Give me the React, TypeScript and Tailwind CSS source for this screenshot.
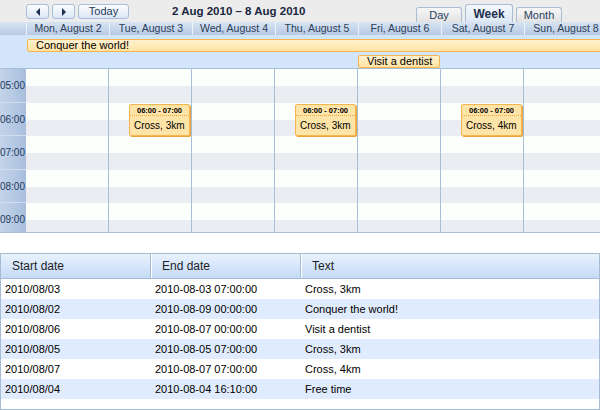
import React from 'react';

const days = [
  'Mon, August 2',
  'Tue, August 3',
  'Wed, August 4',
  'Thu, August 5',
  'Fri, August 6',
  'Sat, August 7',
  'Sun, August 8',
];

// hour rows alternate 34/33 so the lines land where the original ones do
const hours = [
  { label: '05:00', h: 'h-[34px]' },
  { label: '06:00', h: 'h-[33px]' },
  { label: '07:00', h: 'h-[34px]' },
  { label: '08:00', h: 'h-[33px]' },
  { label: '09:00', h: 'h-[34px]' },
];

const cross: Record<number, string> = { 1: 'Cross, 3km', 3: 'Cross, 3km', 5: 'Cross, 4km' };

const rows = [
  ['2010/08/03', '2010-08-03 07:00:00', 'Cross, 3km'],
  ['2010/08/02', '2010-08-09 00:00:00', 'Conquer the world!'],
  ['2010/08/06', '2010-08-07 00:00:00', 'Visit a dentist'],
  ['2010/08/05', '2010-08-05 07:00:00', 'Cross, 3km'],
  ['2010/08/07', '2010-08-07 07:00:00', 'Cross, 4km'],
  ['2010/08/04', '2010-08-04 16:10:00', 'Free time'],
];

const NavButton = ({ dir }: { dir: 'left' | 'right' }) => (
  <button className="w-[23px] h-[15px] flex items-center justify-center rounded-[3px] border border-[#a9bdd6] bg-gradient-to-b from-[#fbfdff] to-[#dbe6f4]">
    <svg width="6" height="8" viewBox="0 0 6 8">
      {dir === 'left' ? <path d="M5 0 L1 4 L5 8 Z" fill="#1c2f4d" /> : <path d="M1 0 L5 4 L1 8 Z" fill="#1c2f4d" />}
    </svg>
  </button>
);

const Tab = ({ label, active }: { label: string; active?: boolean }) => (
  <div
    className={
      active
        ? 'w-[48px] h-[18px] flex items-center justify-center rounded-t-[3px] border border-b-0 border-[#a9bdd6] bg-gradient-to-b from-[#f4f8fd] to-[#dde7f3] text-[12px] font-bold text-[#1c2f4d]'
        : 'w-[46px] h-[15px] flex items-center justify-center rounded-t-[3px] border border-b-0 border-[#a9bdd6] bg-gradient-to-b from-[#f7f7f7] to-[#e3e3e3] text-[11px] text-[#2a3f60]'
    }
  >
    {label}
  </div>
);

const App = () => {
  return (
    <div className="w-[600px] h-[410px] bg-white overflow-hidden" style={{ fontFamily: '"Liberation Sans", Arial, sans-serif' }}>
      {/* Scheduler */}
      <div className="h-[233px] flex flex-col overflow-hidden">
        {/* toolbar */}
        <div className="h-[22px] shrink-0 flex bg-[#ececec] pl-[26px]">
          <div className="flex gap-[3px] pt-[4px]">
            <NavButton dir="left" />
            <NavButton dir="right" />
            <button className="w-[51px] h-[15px] rounded-[3px] border border-[#a9bdd6] bg-gradient-to-b from-[#fbfdff] to-[#dbe6f4] text-[11px] leading-[13px] text-[#1f3a5f]">
              Today
            </button>
          </div>
          <div className="ml-[43px] pt-[4px] text-[11.5px] font-bold text-[#1a2740] leading-[14px] whitespace-nowrap">
            2 Aug 2010 – 8 Aug 2010
          </div>
          <div className="ml-auto mr-[38px] flex items-end gap-[3px]">
            <Tab label="Day" />
            <Tab label="Week" active />
            <Tab label="Month" />
          </div>
        </div>

        {/* day headers */}
        <div className="h-[13px] shrink-0 flex bg-gradient-to-b from-[#d8e4f3] to-[#b7cae3] overflow-hidden">
          <div className="w-[26px] shrink-0" />
          {days.map((d) => (
            <div key={d} className="w-[83px] shrink-0 border-l border-[#eef3fa] text-center text-[10.5px] leading-[13px] text-[#2b3d58] whitespace-nowrap">
              {d}
            </div>
          ))}
        </div>

        {/* all-day events */}
        <div className="h-[34px] shrink-0 flex bg-[#d3e5fb] border-b border-[#a7bfd6] overflow-hidden">
          <div className="w-[26px] shrink-0" />
          <div className="grid grid-cols-[repeat(7,83px)] gap-y-[3px] pt-[4px] content-start">
            <div className="col-span-7 ml-[1px] h-[13px] rounded-[2px] border border-[#f7b550] bg-gradient-to-b from-[#fff1cf] to-[#ffe3a4] pl-[8px] text-[11px] leading-[11px] text-black">
              Conquer the world!
            </div>
            <div className="col-start-5 mr-[1px] h-[13px] rounded-[2px] border border-[#f7b550] bg-gradient-to-b from-[#fff1cf] to-[#ffe3a4] pl-[8px] text-[11px] leading-[11px] text-black">
              Visit a dentist
            </div>
          </div>
        </div>

        {/* hours */}
        <div className="h-[164px] shrink-0 flex border-b border-[#a7bfd6] overflow-hidden">
          <div className="w-[26px] shrink-0 flex flex-col bg-gradient-to-r from-[#c3d3ea] via-[#b7cae4] to-[#a7bedc]">
            {hours.map((h) => (
              <div key={h.label} className={`${h.h} shrink-0 border-b border-[#d2deee] flex items-center justify-end pr-[1px] text-[10px] text-[#203a5c]`}>
                {h.label}
              </div>
            ))}
          </div>
          {days.map((d, i) => (
            <div key={d} className="w-[83px] shrink-0 relative border-r border-[#a7bfd6] flex flex-col">
              {hours.map((h) => (
                <div key={h.label} className={`${h.h} shrink-0 flex flex-col`}>
                  <div className="h-[17px] shrink-0 bg-[#fdfffd]" />
                  <div className="flex-1 bg-[#ececf3]" />
                </div>
              ))}
              {cross[i] && (
                <div className="absolute left-[20px] top-[35px] w-[61px] h-[32px] rounded-[2px] border border-[#f7b550] bg-[#ffe4a8] shadow-[1px_1px_0_#eaa43c]">
                  <div className="h-[11px] border-b border-dotted border-[#f0a640] text-center text-[7.5px] font-bold leading-[11px] text-black">
                    06:00 - 07:00
                  </div>
                  <div className="pl-[4px] pt-[3px] text-[10px] leading-[13px] text-black whitespace-nowrap">{cross[i]}</div>
                </div>
              )}
            </div>
          ))}
        </div>
      </div>

      {/* Grid */}
      <div className="mt-[20px] h-[157px] border border-[#a5bcd4] flex flex-col">
        <div className="h-[25px] shrink-0 flex border-b border-[#a5bcd4] bg-gradient-to-b from-[#e9f2fd] to-[#c4daf7] text-[12px] text-[#1e1e1e]">
          <div className="w-[150px] shrink-0 pl-[11px] flex items-center border-r border-[#a5bcd4]">Start date</div>
          <div className="w-[150px] shrink-0 pl-[10px] flex items-center border-r border-[#a5bcd4] border-l border-l-white">End date</div>
          <div className="flex-1 pl-[10px] flex items-center border-l border-white">Text</div>
        </div>
        {rows.map((r, i) => (
          <div key={i} className={`h-[20px] shrink-0 flex text-[11px] text-black ${i % 2 ? 'bg-[#e0ecfd]' : 'bg-white'}`}>
            <div className="w-[150px] shrink-0 pl-[4px] flex items-center">{r[0]}</div>
            <div className="w-[150px] shrink-0 pl-[4px] flex items-center">{r[1]}</div>
            <div className="flex-1 pl-[4px] flex items-center">{r[2]}</div>
          </div>
        ))}
      </div>
    </div>
  );
};

export default App;
